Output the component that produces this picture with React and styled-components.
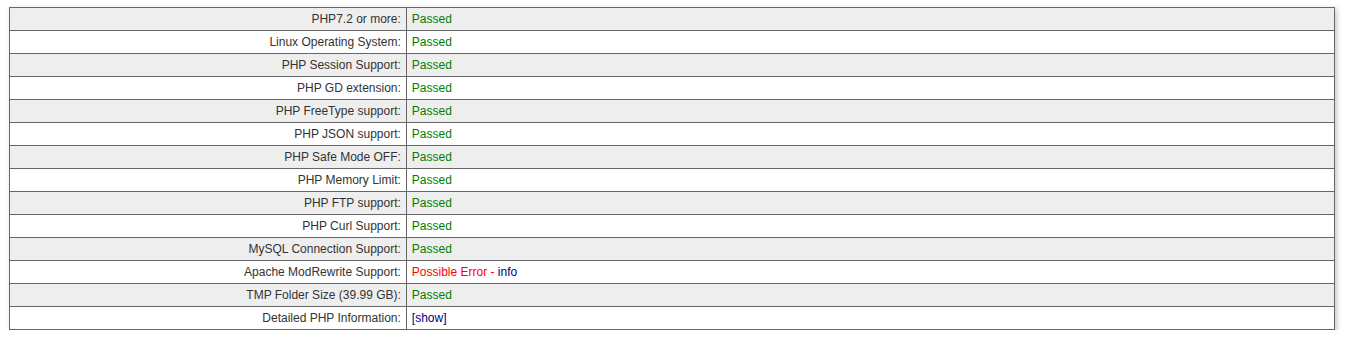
import React from "react";
import styled, { createGlobalStyle } from "styled-components";

const Global = createGlobalStyle`
  html, body { margin: 0; padding: 0; background: #fff; }
  body { font-family: "Liberation Sans", Arial, sans-serif; font-size: 12px; color: #333; }
`;

const Wrap = styled.div`
  padding: 7px 16px 0 9px;
`;

const Table = styled.table`
  width: 100%;
  border-collapse: collapse;
  border: 1px solid #666;
  box-shadow: 2px 2px 5px rgba(0, 0, 0, 0.22);
`;

const Row = styled.tr`
  background: ${(p) => (p.$alt ? "#eeeeee" : "#ffffff")};
`;

const Label = styled.td`
  width: 29.95%;
  text-align: right;
  padding: 0 5px;
  height: 22px;
  border: 1px solid #666;
  color: #333;
`;

const Value = styled.td`
  text-align: left;
  padding: 0 5px;
  height: 22px;
  border: 1px solid #666;
`;

const Status = styled.span`
  color: ${(p) => (p.$error ? "#ff0000" : "#008000")};
`;

const Link = styled.a`
  color: #000080;
  text-decoration: none;
  cursor: pointer;
`;

const rows = [
  ["PHP7.2 or more:", "ok"],
  ["Linux Operating System:", "ok"],
  ["PHP Session Support:", "ok"],
  ["PHP GD extension:", "ok"],
  ["PHP FreeType support:", "ok"],
  ["PHP JSON support:", "ok"],
  ["PHP Safe Mode OFF:", "ok"],
  ["PHP Memory Limit:", "ok"],
  ["PHP FTP support:", "ok"],
  ["PHP Curl Support:", "ok"],
  ["MySQL Connection Support:", "ok"],
  ["Apache ModRewrite Support:", "error"],
  ["TMP Folder Size (39.99 GB):", "ok"],
  ["Detailed PHP Information:", "show"],
];

export default function App() {
  return (
    <>
      <Global />
      <Wrap>
        <Table>
          <tbody>
            {rows.map(([label, kind], i) => (
              <Row key={label} $alt={i % 2 === 0}>
                <Label>{label}</Label>
                <Value>
                  {kind === "ok" && <Status>Passed</Status>}
                  {kind === "error" && (
                    <>
                      <Status $error>Possible Error - </Status>
                      <Link>info</Link>
                    </>
                  )}
                  {kind === "show" && <Link>[show]</Link>}
                </Value>
              </Row>
            ))}
          </tbody>
        </Table>
      </Wrap>
    </>
  );
}
